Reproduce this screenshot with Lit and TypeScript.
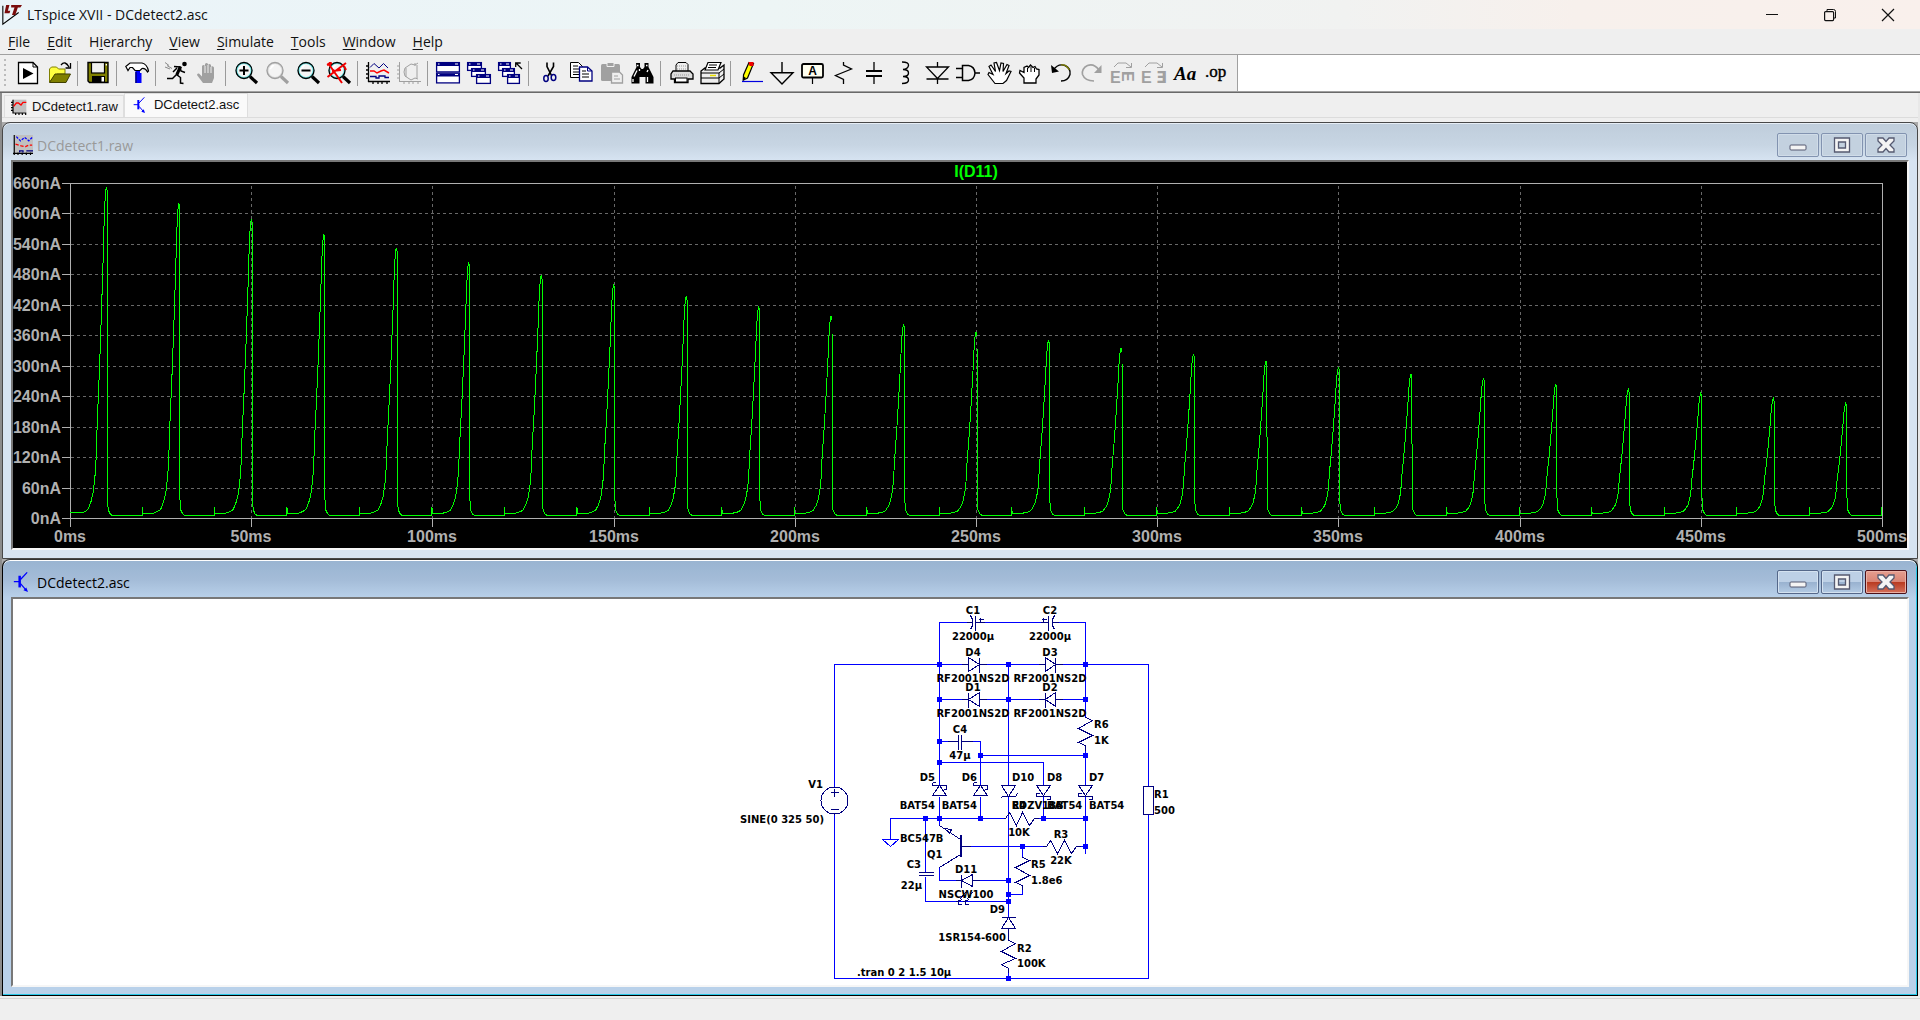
import { LitElement, html, svg, css, TemplateResult, SVGTemplateResult } from "lit";
import { customElement, property } from "lit/decorators.js";

const K = "#000";
const N = "#000080";
const G = "#a0a0a0";

const lens = (rim: string, shine: string, handle: string) => svg`
  <circle cx="10" cy="9.5" r="7.5" fill="#f4f4f4" stroke=${shine} stroke-width="2"/>
  <circle cx="10" cy="9.5" r="8" fill="none" stroke=${rim} stroke-width="1.3"/>
  <path d="M6 6l2-2M5 8l4-4" stroke="#fff" stroke-width="1.2"/>
  <path d="M16 15.5l7 6.5" stroke=${handle} stroke-width="3.2"/>`;

const miniWin = (x: number, y: number, w: number, h: number) => svg`
  <rect x=${x + 0.6} y=${y + 0.6} width=${w - 1.2} height=${h - 1.2} fill="#fff" stroke=${N} stroke-width="1.3"/>
  <rect x=${x + 1} y=${y + 1} width=${w - 2} height="3" fill=${N}/>
  <path d="M${x + 2} ${y + 2}h1.5M${x + w - 5} ${y + 2}h3" stroke="#fff" stroke-width="1.2"/>`;

const ICONS: Record<string, SVGTemplateResult> = {
  run: svg`<path d="M2.5 1.5H17L21.5 6V22.5H2.5Z" fill="#fff" stroke=${K} stroke-width="1.3"/><path d="M17 1.5V6h4.5" fill="none" stroke=${K}/><path d="M7 7v11l10.5-5.5z" fill=${K}/>`,
  open: svg`<path d="M2.5 21V8l2-2h5l2 2h6.5v5H10z" fill="#ffff40" stroke="#808000"/><path d="M2.5 21.5L8 13h15.5l-4.5 8.5z" fill="#808000" stroke="#404000"/><path d="M14 4q4-5 8 2M23.5 2v5h-5" fill="none" stroke=${K} stroke-width="1.3"/>`,
  save: svg`<path d="M2 1.5H22V21.5H3.5L2 20z" fill="#808000" stroke=${K} stroke-width="1.4"/><rect x="5.5" y="1.5" width="13" height="10.5" fill="#efefef" stroke=${K} stroke-width="1.2"/><rect x="6" y="15" width="13" height="6.5" fill=${K}/><rect x="15.5" y="16" width="2.5" height="4.5" fill="#fff"/><rect x="19.7" y="3" width="1.3" height="1.5" fill="#fff"/>`,
  hammer: svg`<path d="M10.500 9h4.500v3h1.500v10h-6V12z" fill="#0000ff"/><path d="M11 11v11" stroke=${N} stroke-width="1.500"/><path d="M.8 5.5L5 2h12q5 1 6.500 8l-1 1q-2-4-5.500-3.500L15 9.500h-5L7.500 6.500H5l-2 3z" fill="#fff" stroke=${K} stroke-width="1.2"/>`,
  runner: svg`<circle cx="20.5" cy="3" r="2.3" fill=${K}/><path d="M10 5.5l6 .5 1 4 4 1.5M16.5 6l-4 7.5 4 3v5.5l3 .5M12.5 13.5l-4 4H3M13 7l-4 4" fill="none" stroke=${K} stroke-width="1.5"/><path d="M15 5l3 1-4 9-2.5-2z" fill=${K}/><path d="M1 1.5l4 3M3 4.5l5 3M1 6l5 2" stroke="#888" stroke-width="1"/>`,
  halt: svg`<path d="M8 22l-6-8q0-2 2-1.5l3 3V5q1.5-2 3 0V3q1.5-2 3 0v1q1.5-2 3 0v2q1.5-1.5 3 .5V17l-2 5z" fill=${G}/><path d="M10 5v7M13 4v8M16 6v6" stroke="#efefef"/>`,
  zoomin: svg`${lens(K, "#70e8e8", K)}<path d="M5.5 9.5h9M10 5v9" stroke=${K} stroke-width="2"/>`,
  zoompan: lens(G, "#d8d8d8", G),
  zoomout: svg`${lens(K, "#70e8e8", K)}<path d="M5.5 9.5h9" stroke=${K} stroke-width="2"/>`,
  zoomfit: svg`${lens(K, "#70e8e8", K)}<path d="M1 2l14 20M19 2L.5 16M3 1v4M0 4l5-2M5 10l9-1M17 5l2 4" fill="none" stroke="#f00000" stroke-width="2"/>`,
  plot: svg`<path d="M2.5 1v20M2 20.5h22M0 5h2.5M0 9h2.5M0 13h2.5M0 17h2.5M7 20v3M12 20v3M16 20v3M21 20v3" fill="none" stroke=${K} stroke-width="1.3"/><path d="M4 6.5l4-4 5 4.500 4.500-4.500L22 7" fill="none" stroke=${N}/><path d="M4 10h4l3 2 4-2 3-1 5 3" fill="none" stroke="red" stroke-width="1.5"/><path d="M4 15.5h6v1.500h3v-2h6v1.500h4" fill="none" stroke=${N} stroke-width="1.3"/>`,
  polar: svg`<path d="M2.5 1v20M2 20.5h22M0 5h2.5M0 9h2.5M0 13h2.5M0 17h2.5M7 20v3M12 20v3M16 20v3M21 20v3" fill="none" stroke=${G}/><path d="M21 2l-3 2-4-1-6 4-1 4 1 4 6 4 4-2 3 1M18 2v3M20 4v13M9 7v9" fill="none" stroke=${G}/>`,
  tile: svg`${miniWin(0, 1, 24, 10.5)}${miniWin(0, 11.5, 24, 11)}`,
  cascade: svg`${miniWin(0, 1, 15, 9)}${miniWin(4, 7, 15, 9)}${miniWin(9, 13, 15, 10)}`,
  close: svg`${miniWin(0, 1, 13, 9)}${miniWin(4, 7, 13, 9)}${miniWin(9, 13, 13, 10)}<path d="M24 8l-6-6M17.7 6V2h5" fill="none" stroke=${K} stroke-width="1.3"/>`,
  cut: svg`<path d="M10 1.5v4l4.500 9M16.500 1.500v4L11 15" fill="none" stroke=${K} stroke-width="1.6"/><ellipse cx="9" cy="17.5" rx="2.2" ry="3" fill="none" stroke=${N} stroke-width="1.5"/><ellipse cx="16.5" cy="16.5" rx="2.3" ry="3" fill="none" stroke=${N} stroke-width="1.5"/>`,
  copy: svg`<path d="M2.5 1.5h8l4 4V16.5h-12z" fill="#fff" stroke=${K}/><path d="M5 5h5M5 8h7M5 11h7M5 13.5h6" stroke=${K}/><path d="M11.5 6h8l4.500 4v10h-12.500z" fill="#fff" stroke=${N} stroke-width="1.3"/><path d="M19.5 6v4H24" fill="none" stroke=${N}/><path d="M14 10h4M14 13h7M14 16h7" stroke=${K}/>`,
  paste: svg`<rect x="2" y="3" width="19" height="17" rx="1.5" fill=${G}/><path d="M8 1.5h7v4H8z" fill=${G} stroke="#efefef"/><path d="M12.5 11h8l3 3v8h-11z" fill="#efefef" stroke=${G} stroke-width="1.3"/><path d="M15 15h4M15 18h6" stroke=${G}/>`,
  find: svg`<path d="M6 2h4v4l1.500 2h1.500l1.500-2V2h4v4l5 10v6.500h-8V16h-6v6.500h-8V16l5-10z" fill=${K}/><path d="M7 4.5h1.500M16 4.500h1.500M7 9.500l-3 6M9.500 8v2M18 9l-1 2M3 18v3M17.500 16v5" stroke="#fff" stroke-width="1.3"/>`,
  print: svg`<path d="M7 10V4l2-2.500h8l2 2V10" fill="#eee" stroke=${K}/><path d="M4 10h17l3 3v5h-5v3.500H5.500V18H2v-5z" fill="#ddd" stroke=${K} stroke-width="1.3"/><path d="M8 5h9M8 8h9M5 14h16" stroke="#999" stroke-dasharray="1 1"/><rect x="6.5" y="17" width="11.5" height="4" fill="#fff" stroke=${K}/>`,
  setup: svg`<path d="M1 10l4-3h15l4-3v14l-5 4.500H1z" fill="#eee" stroke=${K} stroke-width="1.3"/><path d="M5 9l3-7.500h13L18 9z" fill="#fff" stroke=${K} stroke-width="1.2"/><path d="M9 4h8M8 6.500h8M1 12h18l5-4M19 12v10M1 17h18l5-4" fill="none" stroke=${K}/><path d="M10 14.500h6" stroke="#e8e000" stroke-width="1.5"/>`,
  pencil: svg`<path d="M10 1.5l4.500 1L8.500 17l-4 2 0-5z" fill="#ffff00" stroke=${K} stroke-width="1.2"/><path d="M9.500 1h5v4h-4z" fill="#f00000"/><path d="M4 15l3 2-3.500 3z" fill=${K}/><path d="M3 20.500h21" stroke="#0000e0" stroke-width="1.2"/>`,
  ground: svg`<path d="M12 1v11M1 11.700h22L12 23z" fill="none" stroke=${K} stroke-width="1.4"/>`,
  label: svg`<rect x="1" y="3" width="21" height="13.5" rx="1.5" fill="#fffff0" stroke=${K} stroke-width="1.8"/><path d="M11.500 17v6" stroke=${K} stroke-width="1.2"/><text x="11.500" y="14" text-anchor="middle" font-family="Liberation Sans, sans-serif" font-weight="bold" font-size="12">A</text>`,
  resistor: svg`<path d="M11.500 1v3l8 4-16 6.500 8 4V23" fill="none" stroke=${K} stroke-width="1.3"/>`,
  cap: svg`<path d="M11 1v9M11 15v8" stroke=${K} stroke-width="1.3"/><path d="M3 10h16M3 15h16" stroke=${K} stroke-width="2"/>`,
  inductor: svg`<path d="M8 1q7 0 6.500 3.500T9 8.500q5.500 0 5.500 3.500T9 15.500q5.500 0 5.500 3.500T8 22.500" fill="none" stroke=${K} stroke-width="1.4"/>`,
  diode: svg`<path d="M12.500 1v5M1.500 6h22L12.500 17.500zM1.500 18h22M12.500 18v5" fill="none" stroke=${K} stroke-width="1.3"/>`,
  gate: svg`<path d="M6.500 4.500h6q6 1 6.500 7.500-.5 6.500-6.500 7.500h-6zM0 7.500h6M0 16.500h6M19 12h5" fill="none" stroke=${K} stroke-width="1.5"/>`,
  move: svg`<path d="M8 22.500L1 13.500l1-2 4 2-4-8 2-1.500 4.500 6.500L7 2l2.500-.5 3 8L14 2l2.500.5-.5 8 4-7 2 1-3 8 3-2.500 2 .5-4.500 9L16 22.500z" fill="#fff" stroke=${K} stroke-width="1.2"/>`,
  drag: svg`<path d="M6 22v-5l-4.500-5 .5-2.500 4 2V6.500L9 5l1.500 1.500 2-2.500L15 6.500l2-1 1.500 2.500 2.500.5V14l-3 4v4z" fill="#fff" stroke=${K} stroke-width="1.3"/><path d="M9.500 7v4M13 6v5M16.500 7v4" stroke=${K}/>`,
  undo: svg`<path d="M4 9.500Q9 2 16 4.500q6 3 5 9-2 6.500-9 6.500" fill="none" stroke=${K} stroke-width="1.4"/><path d="M12 4q5-1 8.500 5" fill="none" stroke="#808000" stroke-width="1.2"/><path d="M2 4l1 8 7-1.500z" fill=${K}/>`,
  redo: svg`<path d="M19 9Q14 2 7.500 4.500q-6 3-5 9Q5 20 14 20" fill="none" stroke=${G} stroke-width="1.6"/><path d="M21.500 4v8h-7.500z" fill=${G}/>`,
  rotate: svg`<path d="M3 6l4-4h8l5 4M20.500 2v4.500H15" fill="none" stroke=${G}/><text x="-1" y="22" font-family="Liberation Sans, sans-serif" font-weight="bold" font-size="16" fill=${G}>E</text><text x="0" y="0" transform="translate(11 10) rotate(90)" font-family="Liberation Sans, sans-serif" font-weight="bold" font-size="16" fill=${G}>E</text>`,
  mirror: svg`<path d="M3 6l4-4h8l5 4M20.500 2v4.500H15" fill="none" stroke=${G}/><text x="-1" y="22" font-family="Liberation Sans, sans-serif" font-weight="bold" font-size="16" fill=${G}>E</text><text x="14" y="22" font-family="DejaVu Sans, sans-serif" font-weight="bold" font-size="16" fill=${G}>Ǝ</text>`,
  text: svg`<text x="1" y="19" font-family="Liberation Serif, serif" font-weight="bold" font-style="italic" font-size="19">Aa</text>`,
  directive: svg`<text x="1" y="16" font-family="Liberation Serif, serif" font-size="17" stroke=${K} stroke-width=".4">.op</text>`,
  wave: svg`<rect x="3" y="1" width="20" height="19" fill="#c0c0c0"/><path d="M3 1v20h20M0 5h3M0 9h3M0 13h3M0 17h3M7 21v3M12 21v3M17 21v3M22 21v3" fill="none" stroke=${K} stroke-width="1.8"/><path d="M4 11l4-5h3l4 3 3-4h5" fill="none" stroke="red" stroke-width="2"/>`,
  traces: svg`<rect x="1" y="0" width="23" height="22" fill="#c0c0c0"/><path d="M1.500 0v24M0 22h24M6 21v3M11 21v3M16 21v3M21 21v3" stroke=${K} stroke-width="1.4"/><path d="M4 2l5 5 5-4 5 4 4-4" fill="none" stroke="blue" stroke-dasharray="3 1.5" stroke-width="1.5"/><path d="M3 11l7 2 5 1 4-2h4" fill="none" stroke="red" stroke-dasharray="4 2" stroke-width="1.5"/><path d="M8 21v-2h4v2M16 19h8" fill="none" stroke=${N} stroke-width="1.5"/>`,
  transistor: svg`<path d="M1 11.500h7M9 9l8-8.500M9 14l7 8" fill="none" stroke="#0000ff" stroke-width="1.5"/><path d="M8 4.500v14" stroke="#0000ff" stroke-width="3"/><path d="M18 24l-5.500-2 3.500-3.500z" fill="#0000ff"/>`,
  logo: svg`<path d="M1 1v22l19-14" fill="none" stroke=${K} stroke-width="1.3"/><path d="M5 0h4L7 7h3l-1 3H3zM11 0h13l-2 3h-3l-3 9h-4l3-9h-4z" fill="#7a0c0c"/>`,
};

const icon = (name: string, size = 24): TemplateResult => html`
  <svg width=${size} height=${size} viewBox="0 0 24 24" aria-hidden="true">${ICONS[name]}</svg>`;

const iconCss = css`svg { display: block; flex: none; overflow: visible; }`;

/* ---------------------------------------------------------------- plot */

@customElement("wave-plot")
class WavePlot extends LitElement {
  static styles = css`
    :host { display: block; background: #000; min-height: 0; }
    svg { display: block; width: 100%; height: 100%; }
    .axis { stroke: #b0b0b0; shape-rendering: crispEdges; fill: none; }
    .grid { stroke: #686868; stroke-dasharray: 3 3; shape-rendering: crispEdges; }
    .trace { stroke: #00ff00; fill: none; shape-rendering: crispEdges; }
    text { font: bold 16px "Liberation Sans", Arial, sans-serif; fill: #b0b0b0; }
    .name { fill: #00ff00; }
  `;

  private peaks = [187, 203, 219, 234, 248, 262, 275, 284, 296, 306, 316, 324, 332, 340,
    348, 354, 361, 367, 374, 378, 384, 389, 393, 398, 403];

  /* rise of one pulse: [px before the peak, fraction of its height] */
  private rise = [[25, 0], [21, 0.005], [18, 0.012], [15, 0.037], [13, 0.064], [11, 0.12],
    [10, 0.172], [9, 0.273], [8, 0.347], [7, 0.42], [6, 0.503], [5, 0.592], [4, 0.687],
    [3, 0.785], [2, 0.9], [1, 0.97], [0, 1]];

  private trace(): string {
    const period = 1812 / 25;
    const pts: string[] = ["70,512"];
    this.peaks.forEach((peak, i) => {
      const start = 70 + i * period;
      const top = start + period / 2;
      const h = 513 - peak;
      for (const [dx, f] of this.rise) pts.push(`${(top - dx).toFixed(1)},${(513 - h * f).toFixed(1)}`);
      pts.push(`${(top + 1).toFixed(1)},${(peak + 4).toFixed(1)}`);
      pts.push(`${(top + 1.2).toFixed(1)},498`, `${(top + 2).toFixed(1)},510`, `${(top + 4).toFixed(1)},514`, `${(top + 6).toFixed(1)},515.5`);
      const end = start + period;
      pts.push(`${(end - 0.5).toFixed(1)},515.5`, `${(end - 0.5).toFixed(1)},507`, `${end.toFixed(1)},513`);
    });
    return pts.join(" ");
  }

  render() {
    const ys = Array.from({ length: 12 }, (_, i) => 183 + Math.round((335 * i) / 11));
    const xs = Array.from({ length: 11 }, (_, i) => 70 + Math.round(181.2 * i));
    return html`<svg viewBox="13 162 1894 386" role="img" aria-label="I(D11)">
      ${ys.slice(1, 11).map((y) => svg`<line class="grid" x1="71" x2="1882" y1=${y + 0.5} y2=${y + 0.5}/>`)}
      ${xs.slice(1, 10).map((x) => svg`<line class="grid" x1=${x + 0.5} x2=${x + 0.5} y1="186" y2="518"/>`)}
      ${ys.map((y, i) => svg`<line class="axis" x1="62" x2="71" y1=${y + 0.5} y2=${y + 0.5}/>
        <text x="61" y=${y + 6} text-anchor="end">${660 - 60 * i}nA</text>`)}
      ${xs.map((x, i) => svg`<line class="axis" x1=${x + 0.5} x2=${x + 0.5} y1="518" y2="527"/>
        <text x=${x} y="542" text-anchor="middle">${50 * i}ms</text>`)}
      <rect class="axis" x="70.5" y="183.5" width="1812" height="335"/>
      <polyline class="trace" points=${this.trace()}/>
      <text class="name" x="976" y="177" text-anchor="middle">I(D11)</text>
    </svg>`;
  }
}

/* ----------------------------------------------------------- schematic */

const LABELS: [string, number, number, string][] = [
  ["C1", 973, 614, "middle"], ["C2", 1050, 614, "middle"],
  ["22000µ", 973, 640, "middle"], ["22000µ", 1050, 640, "middle"],
  ["D4", 973, 656, "middle"], ["D3", 1050, 656, "middle"],
  ["RF2001NS2D", 973, 682, "middle"], ["RF2001NS2D", 1050, 682, "middle"],
  ["D1", 973, 691, "middle"], ["D2", 1050, 691, "middle"],
  ["RF2001NS2D", 973, 717, "middle"], ["RF2001NS2D", 1050, 717, "middle"],
  ["C4", 960, 733, "middle"], ["47µ", 960, 759, "middle"],
  ["R6", 1094, 728, "start"], ["1K", 1094, 744, "start"],
  ["D5", 935, 781, "end"], ["D6", 977, 781, "end"],
  ["D10", 1012, 781, "start"], ["D8", 1047, 781, "start"], ["D7", 1089, 781, "start"],
  ["V1", 823, 788, "end"], ["SINE(0 325 50)", 824, 823, "end"],
  ["R1", 1154, 798, "start"], ["500", 1154, 814, "start"],
  ["BAT54", 935, 809, "end"], ["BAT54", 977, 809, "end"],
  ["EDZV18B", 1012, 809, "start"], ["BAT54", 1047, 809, "start"], ["BAT54", 1089, 809, "start"],
  ["R4", 1019, 809, "middle"], ["10K", 1019, 836, "middle"],
  ["R3", 1061, 838, "middle"], ["22K", 1061, 864, "middle"],
  ["BC547B", 900, 842, "start"], ["Q1", 927, 858, "start"],
  ["R5", 1031, 868, "start"], ["1.8e6", 1031, 884, "start"],
  ["C3", 921, 868, "end"], ["22µ", 922, 889, "end"],
  ["D11", 966, 873, "middle"], ["NSCW100", 966, 898, "middle"],
  ["D9", 1005, 913, "end"], ["1SR154-600", 1006, 941, "end"],
  ["R2", 1017, 952, "start"], ["100K", 1017, 967, "start"],
  [".tran 0 2 1.5 10µ", 857, 976, "start"],
];

const NODES = [
  [939, 664], [1008, 664], [1085, 664], [939, 699], [1008, 699], [1085, 699],
  [939, 741], [980, 755], [1085, 755], [939, 762], [925, 818], [939, 818], [980, 818],
  [1043, 818], [1085, 818], [1022, 846], [1085, 846], [1008, 880], [1008, 894],
  [1008, 901], [1008, 978],
];

const WIRES = [
  "M834 787V664H968M979 664H1045M1055 664H1148V786", "M834 814V978H1148V814",
  "M939 785V622H966M984 622H1040M1058 622H1085V717", "M939 699H961M986 699H1038M1062 699H1085",
  "M939 741H947M972 741H980V785", "M980 755H1085M1085 745V785", "M939 762H1043V785",
  "M1008 664V785M1008 796V917", "M939 796V825M980 796V818M1043 796V818M1085 796V853",
  "M890 839V818H1005M1034 818H1085", "M966 846H1046M1076 846H1085", "M925 818V872M925 876V901H1008",
  "M939 867V880H955M979 880H1008", "M1022 846V857M1022 885V894H1008", "M1008 968V978",
];

const PARTS = [
  /* C1, C2, C4, C3 */
  "M966 622H972M975 622H984M975 615V630M970 615L972 619V625L970 629M978 619H983M980 617V622",
  "M1040 622H1048M1052 622H1058M1048 615V630M1054 615L1052 619V625L1054 629M1041 619H1046M1043 617V622",
  "M947 741H958M961 741H972M958 734V749M961 734V749", "M918 872H933M918 875H933",
  /* D4, D3, D1, D2 */
  "M961 664H968M979 664H986M968 657V671L979 664ZM979 657V672", "M1038 664H1045M1055 664H1062M1045 657V671L1055 664ZM1055 657V672",
  "M961 699H968M979 699H986M979 692V706L968 699ZM968 692V707", "M1038 699H1045M1055 699H1062M1055 692V706L1045 699ZM1045 692V707",
  /* D5, D6, D10, D8, D7 */
  "M932 795H946L939 785ZM932 782V785H946V789H943M932 782H935", "M973 795H987L980 785ZM973 782V785H987V789H984M973 782H976",
  "M1001 785H1015L1008 796ZM1000 798L1002 796H1015L1017 793",
  "M1036 785H1050L1043 795ZM1039 793H1036V796H1050V799H1046", "M1078 785H1092L1085 795ZM1081 793H1078V796H1092V799H1088",
  /* R6, R4, R3, R5, R2, R1 */
  "M1085 717L1092 720L1078 728L1092 735L1078 742L1085 745V750", "M1003 818H1005L1009 812L1016 825L1022 812L1029 825L1034 818H1038",
  "M1042 846H1046L1050 840L1057 853L1064 840L1071 853L1076 846H1080", "M1022 857L1029 860L1015 867L1029 875L1015 882L1022 885V889",
  "M1008 936V940L1015 943L1001 951L1015 958L1001 964L1008 968V972", "M1143 786H1153V814H1143Z",
  /* Q1, D11, D9 */
  "M939 825L960 839M960 854L939 867M961 846H970M944 828L951 829L949 833Z", "M955 880H961M972 880H979M972 874V886L961 880ZM961 874V887",
  "M965 892L959 899M972 892L966 899M958 899V904H961M965 899V904H968M956 901L962 899M963 901L969 899",
  "M1001 917H1015M1008 917L1015 928H1001ZM1008 928V936",
  /* V1 polarity */
  "M830 792H838M834 788V796M830 809H838",
];

@customElement("circuit-sheet")
class CircuitSheet extends LitElement {
  static styles = css`
    :host { display: block; background: #fff; min-height: 0; }
    svg { display: block; width: 100%; height: 100%; }
    .wire { stroke: #0000ff; fill: none; shape-rendering: crispEdges; }
    .part { stroke: #000080; fill: none; shape-rendering: crispEdges; }
    .bar { fill: #000080; }
    .node { fill: #0000ff; }
    text { font: bold 10px "DejaVu Sans", Tahoma, sans-serif; fill: #000; }
  `;
  render() {
    return html`<svg viewBox="13 599 1894 386" role="img" aria-label="DCdetect2.asc">
      <g transform="translate(.5 .5)">
        ${WIRES.map((d) => svg`<path class="wire" d=${d}/>`)}
        ${PARTS.map((d) => svg`<path class="part" d=${d}/>`)}
        <circle class="part" cx="834" cy="800" r="13.5"/>
        <path class="wire" d="M882 839H898L890 846Z"/>
      </g>
      <rect class="bar" x="960" y="835" width="2" height="22"/>
      ${NODES.map(([x, y]) => svg`<rect class="node" x=${x - 2} y=${y - 2} width="5" height="5"/>`)}
      ${LABELS.map(([t, x, y, a]) => svg`<text x=${x} y=${y} text-anchor=${a}>${t}</text>`)}
    </svg>`;
  }
}

/* ---------------------------------------------------------- mdi window */

@customElement("mdi-window")
class MdiWindow extends LitElement {
  @property() heading = "";
  @property() glyph = "";
  @property({ type: Boolean, reflect: true }) active = false;

  static styles = [iconCss, css`
    :host {
      display: flex; flex-direction: column; box-sizing: border-box; min-height: 0;
      border: 1px solid #484848; border-radius: 8px 8px 0 0; padding: 0 8px 8px;
      background: linear-gradient(#bfcddb, #c7d5e3 22px, #d7e4f2 38px);
      box-shadow: inset 0 1px #e6eef6;
    }
    :host([active]) {
      background: linear-gradient(#99b4d1, #a4bcd8 20px, #b9d1ea 38px);
      border-color: #333 #000 #000;
      box-shadow: inset 0 1px #fff, inset -1px -1px #28c8e8;
    }
    .bar { display: flex; align-items: center; box-sizing: border-box; height: 37px; flex: none; gap: 4px; padding: 7px 0 0 2px; }
    .title { flex: 1; font: 14px "Open Sans", "Segoe UI", sans-serif; color: #999; }
    :host([active]) .title { color: #000; }
    .buttons { display: flex; gap: 2px; padding-right: 2px; }
    button {
      width: 42px; height: 24px; padding: 0; display: grid; place-items: center;
      border: 1px solid #8293b0; border-radius: 2px; background: #c3d1df;
      box-shadow: inset 0 0 0 1px #d0dce8;
    }
    :host([active]) button {
      border-color: #55688a; background: linear-gradient(#bdd0e6 50%, #98b1cf 50%, #b4cbe4);
      box-shadow: inset 0 0 0 1px #d4e2f0;
    }
    :host([active]) .close {
      border-color: #4c1018; background: linear-gradient(#e59e90, #d98474 48%, #b8391f 50%, #d4715c);
      box-shadow: inset 0 0 0 1px #eab0a4;
    }
    .client {
      flex: 1; min-height: 0; display: grid; border: 2px solid; border-color: #787878 #f6f6f6 #f6f6f6 #787878;
    }
  `];

  render() {
    return html`
      <div class="bar">
        ${icon(this.glyph, 20)}
        <span class="title">${this.heading}</span>
        <div class="buttons">
          <button aria-label="Minimize"><svg width="18" height="18"><rect x="1" y="9" width="16" height="5" rx="1" fill="#f4f4f4" stroke="#555970"/></svg></button>
          <button aria-label="Maximize"><svg width="18" height="18"><path fill-rule="evenodd" d="M1.5 2h15v14h-15zM5.5 6v6h7V6z" fill="#f4f4f4" stroke="#555970" stroke-width="1.3"/></svg></button>
          <button class="close" aria-label="Close"><svg width="18" height="18"><path d="M1 2h5l3 3.500L12 2h5v3l-4 4 4 4v3h-5l-3-3.500L6 16H1v-3l4-4-4-4z" fill="#f4f4f4" stroke="#555970" stroke-width="1.3"/></svg></button>
        </div>
      </div>
      <div class="client"><slot></slot></div>`;
  }
}

/* ------------------------------------------------------------ app root */

const TOOLS: string[][] = [
  ["run", "open"], ["save"], ["hammer"], ["runner", "halt"],
  ["zoomin", "zoompan", "zoomout", "zoomfit"], ["plot", "polar"],
  ["tile", "cascade", "close"], ["cut", "copy", "paste", "find"], ["print", "setup"],
  ["pencil", "ground", "label", "resistor", "cap", "inductor", "diode", "gate", "move",
    "drag", "undo", "redo", "rotate", "mirror", "text", "directive"],
];

const MENU: [string, string, string][] = [
  ["", "F", "ile"], ["", "E", "dit"], ["H", "i", "erarchy"], ["", "V", "iew"],
  ["", "S", "imulate"], ["", "T", "ools"], ["", "W", "indow"], ["", "H", "elp"],
];

@customElement("app-root")
class AppRoot extends LitElement {
  static styles = [iconCss, css`
    :host {
      display: flex; flex-direction: column; height: 100vh; background: #efefef;
      font: 14px "Open Sans", "Segoe UI", sans-serif; color: #111;
    }
    button { font: inherit; color: inherit; background: none; border: 0; padding: 0; margin: 0; }
    .titlebar {
      display: flex; align-items: center; height: 29px; flex: none; gap: 5px; padding: 0 3px 0 2px;
      background: linear-gradient(90deg, #eaf4f9, #edf5f5 40%, #f1f2f1 70%, #f7f0ec 82%, #f9f0ec);
    }
    .caption { flex: 1; }
    .sys { display: flex; }
    .sys button { width: 58px; height: 29px; display: grid; place-items: center; }
    nav { display: flex; align-items: center; height: 25px; flex: none; gap: 17px; padding-left: 8px; border-bottom: 1px solid #a0a0a0; }
    nav u { text-underline-offset: 2px; }
    .toolrow { display: flex; height: 36px; flex: none; background: #fff; border-bottom: 1px solid #a0a0a0; box-shadow: 0 1px #696969; margin-bottom: 1px; }
    .tools { display: flex; align-items: center; background: #efefef; border-right: 1px solid #a0a0a0; padding: 0 6px 0 4px; }
    .grip { width: 2px; height: 28px; margin-right: 6px; background: repeating-linear-gradient(#bbb 0 2px, transparent 2px 5px); }
    .tool { width: 31px; height: 30px; display: grid; place-items: center; }
    .sep { width: 1px; height: 25px; margin: 0 4px 0 3px; background: #9a9a9a; }
    .work { flex: 1; min-height: 0; display: flex; flex-direction: column; border-left: 2px solid #8c8c8c; border-right: 2px solid #e8e8e8; }
    .tabs { display: flex; align-items: flex-end; height: 24px; flex: none; padding-left: 2px; border-bottom: 1px solid #dcdcdc; margin-bottom: 4px; }
    .tab { display: flex; align-items: center; gap: 5px; height: 22px; padding: 0 5px 0 6px; font: 13px "Liberation Sans", Arial, sans-serif; border: 1px solid #dedede; border-bottom: 0; background: #f2f2f2; }
    .tab.on { height: 24px; padding: 0 8px 2px; background: #fafafa; }
    .mdi { flex: 1; min-height: 0; display: grid; grid-template-rows: 1fr 1fr; background: #ababab; }
    .status { height: 21px; flex: none; border-top: 1px solid #d4d4d4; margin-top: 2px; }
  `];

  render() {
    return html`
      <header class="titlebar">
        ${icon("logo", 20)}<span class="caption">LTspice XVII - DCdetect2.asc</span>
        <div class="sys">
          <button aria-label="Minimize"><svg width="12" height="12"><path d="M0 5.5h12" stroke="#111"/></svg></button>
          <button aria-label="Restore"><svg width="12" height="12"><path d="M3 2V.5h6.500q2 0 2 2V9H10" fill="none" stroke="#111"/><rect x=".6" y="2.6" width="9" height="9" rx="1" fill="none" stroke="#111" stroke-width="1.2"/></svg></button>
          <button aria-label="Close"><svg width="12" height="12"><path d="M0 0l12 12M12 0L0 12" stroke="#111" stroke-width="1.2"/></svg></button>
        </div>
      </header>
      <nav>${MENU.map(([a, u, b]) => html`<button>${a}<u>${u}</u>${b}</button>`)}</nav>
      <div class="toolrow"><div class="tools" role="toolbar">
        <span class="grip"></span>
        ${TOOLS.map((group, i) => html`${i ? html`<span class="sep"></span>` : ""}${group.map(
          (t) => html`<button class="tool" aria-label=${t}>${icon(t)}</button>`)}`)}
      </div></div>
      <main class="work">
        <div class="tabs">
          <button class="tab">${icon("wave", 16)}DCdetect1.raw</button>
          <button class="tab on">${icon("transistor", 16)}DCdetect2.asc</button>
        </div>
        <div class="mdi">
          <mdi-window heading="DCdetect1.raw" glyph="traces"><wave-plot></wave-plot></mdi-window>
          <mdi-window heading="DCdetect2.asc" glyph="transistor" active><circuit-sheet></circuit-sheet></mdi-window>
        </div>
      </main>
      <footer class="status"></footer>`;
  }
}
